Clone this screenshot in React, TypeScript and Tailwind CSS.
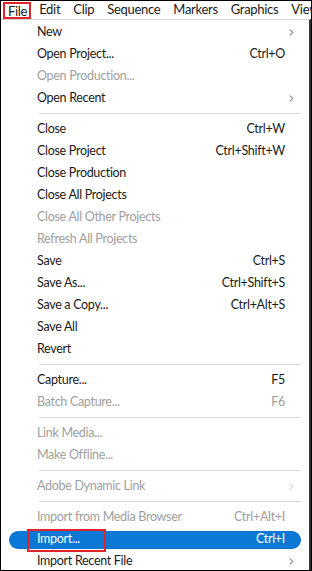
import { ChevronRight } from 'lucide-react'

type Item =
  | { sep: true }
  | { sep?: false; label: string; shortcut?: string; sub?: boolean; disabled?: boolean; active?: boolean }

const items: Item[] = [
  { label: 'New', sub: true },
  { label: 'Open Project...', shortcut: 'Ctrl+O' },
  { label: 'Open Production...', disabled: true },
  { label: 'Open Recent', sub: true },
  { sep: true },
  { label: 'Close', shortcut: 'Ctrl+W' },
  { label: 'Close Project', shortcut: 'Ctrl+Shift+W' },
  { label: 'Close Production' },
  { label: 'Close All Projects' },
  { label: 'Close All Other Projects', disabled: true },
  { label: 'Refresh All Projects', disabled: true },
  { label: 'Save', shortcut: 'Ctrl+S' },
  { label: 'Save As...', shortcut: 'Ctrl+Shift+S' },
  { label: 'Save a Copy...', shortcut: 'Ctrl+Alt+S' },
  { label: 'Save All' },
  { label: 'Revert' },
  { sep: true },
  { label: 'Capture...', shortcut: 'F5' },
  { label: 'Batch Capture...', shortcut: 'F6', disabled: true },
  { sep: true },
  { label: 'Link Media...', disabled: true },
  { label: 'Make Offline...', disabled: true },
  { sep: true },
  { label: 'Adobe Dynamic Link', sub: true, disabled: true },
  { sep: true },
  { label: 'Import from Media Browser', shortcut: 'Ctrl+Alt+I', disabled: true },
  { label: 'Import...', shortcut: 'Ctrl+I', active: true },
  { label: 'Import Recent File', sub: true },
]

const menus = ['Edit', 'Clip', 'Sequence', 'Markers', 'Graphics', 'View']

export default function App() {
  return (
    <div
      className="w-[312px] h-[571px] overflow-hidden bg-white border border-black text-[#1a1a1a] tracking-[-0.3px]"
      style={{ fontFamily: 'Lato, "Noto Sans", sans-serif' }}
    >
      {/* menu bar */}
      <div className="h-[18px] flex items-center text-[13px] whitespace-nowrap">
        <span className="ml-[2px] pl-[3px] pr-[2px] h-[17px] leading-[14px] border-2 border-[#e0242b]">File</span>
        <div className="flex gap-[13px] ml-[8px]">
          {menus.map((m) => (
            <span key={m}>{m}</span>
          ))}
        </div>
      </div>

      {/* dropdown */}
      <div className="border-t border-[#d4d4d4] border-r-2 border-r-[#333] pt-[1px] text-[12.5px]">
        {items.map((it, i) =>
          it.sep ? (
            <div key={i} className="h-[9px] flex items-center pl-[38px] pr-[8px]">
              <div className="h-px w-full bg-[#d9d9d9]" />
            </div>
          ) : (
            <div key={i} className="h-[22px] relative flex items-center">
              {it.active && (
                <>
                  <div className="absolute left-[8px] right-[8px] top-[3px] h-[18px] rounded-full bg-[#0a78d4]" />
                  <div className="absolute left-[26px] w-[79px] top-[1px] h-[23px] border-2 border-[#e0242b]" />
                </>
              )}
              <span
                className={
                  'relative pl-[36px] flex-1 ' +
                  (it.active ? 'text-white' : it.disabled ? 'text-[#a0a0a0]' : 'text-[#1a1a1a]')
                }
              >
                {it.label}
              </span>
              {it.shortcut && (
                <span
                  className={
                    'relative pr-[24px] ' +
                    (it.active ? 'text-white' : it.disabled ? 'text-[#a0a0a0]' : 'text-[#1a1a1a]')
                  }
                >
                  {it.shortcut}
                </span>
              )}
              {it.sub && (
                <ChevronRight
                  size={11}
                  strokeWidth={1.6}
                  className={'relative mr-[12px] ' + (it.disabled ? 'text-[#a0a0a0]' : 'text-[#1a1a1a]')}
                />
              )}
            </div>
          )
        )}
      </div>
    </div>
  )
}
